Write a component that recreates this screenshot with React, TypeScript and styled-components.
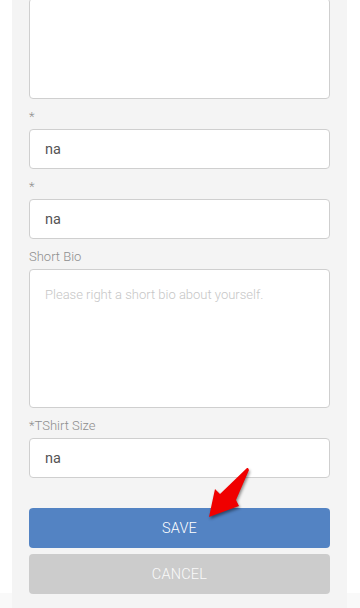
import styled, { createGlobalStyle } from "styled-components";

const GlobalStyle = createGlobalStyle`
  html, body {
    margin: 0;
    padding: 0;
  }
  body {
    font-family: Roboto, "Open Sans", sans-serif;
    background: linear-gradient(to bottom, #ffffff 0, #ffffff 593px, #f9f9f9 593px);
    overflow: hidden;
  }
`

const Page = styled.div`
  width: 360px;
  height: 608px;
  overflow: hidden;
  padding: 0 13px 0 12px;
  box-sizing: border-box;
  position: relative;
`

const Panel = styled.div`
  background: #f4f4f4;
  padding: 0 17px 20px;
  display: flex;
  flex-direction: column;
  min-height: 640px;
`

const Label = styled.label`
  display: block;
  font-size: 13px;
  line-height: 20px;
  color: #8e8e8e;
  margin: 8px 0 2px;
  font-weight: 300;
`

const Input = styled.input`
  box-sizing: border-box;
  width: 100%;
  height: 40px;
  border: 1px solid #cfcfcf;
  border-radius: 4px;
  background: #fff;
  padding: 0 15px;
  font-family: inherit;
  font-size: 14.5px;
  color: #555;
  outline: none;
`

const TextArea = styled.textarea<{ $h: number; $top?: number }>`
  box-sizing: border-box;
  display: block;
  width: 100%;
  height: ${p => p.$h}px;
  margin-top: ${p => p.$top ?? 0}px;
  border: 1px solid #cfcfcf;
  border-radius: 4px;
  background: #fff;
  padding: 17px 15px;
  font-family: inherit;
  font-size: 13px;
  font-weight: 300;
  color: #444;
  resize: none;
  outline: none;

  &::placeholder {
    color: #c6c6c6;
    opacity: 1;
  }
`

const Actions = styled.div`
  display: flex;
  flex-direction: column;
  gap: 6px;
  margin-top: 30px;
`

const Button = styled.button<{ $variant: "primary" | "muted" }>`
  height: 40px;
  border: none;
  border-radius: 4px;
  font-family: inherit;
  font-size: 14.5px;
  font-weight: 300;
  letter-spacing: 0.2px;
  color: ${p => (p.$variant === "primary" ? "#ffffff" : "#fafafa")};
  background: ${p => (p.$variant === "primary" ? "#5383c3" : "#cccccc")};
`

const Pointer = styled.svg`
  position: absolute;
  left: 200px;
  top: 460px;
  width: 60px;
  height: 70px;
  pointer-events: none;
  filter: drop-shadow(1px 2px 1.5px rgba(0, 0, 0, 0.45));
`

export default function App() {
    return (
        <>
            <GlobalStyle/>
            <Page>
                <Panel>
                    <TextArea $h={101} $top={-2} defaultValue=""/>

                    <Label>*</Label>
                    <Input defaultValue="na"/>

                    <Label>*</Label>
                    <Input defaultValue="na"/>

                    <Label>Short Bio</Label>
                    <TextArea $h={139} placeholder="Please right a short bio about yourself."/>

                    <Label>*TShirt Size</Label>
                    <Input defaultValue="na"/>

                    <Actions>
                        <Button $variant="primary">SAVE</Button>
                        <Button $variant="muted">CANCEL</Button>
                    </Actions>
                </Panel>

                {/* annotation arrow */}
                <Pointer viewBox="0 0 60 70">
                    <path
                        d="M48 8 L49 10 L36 40 L39 46 L9 57 L15 29 L20 34 L47 8 Z"
                        fill="#f00000"
                    />
                </Pointer>
            </Page>
        </>
    );
}
